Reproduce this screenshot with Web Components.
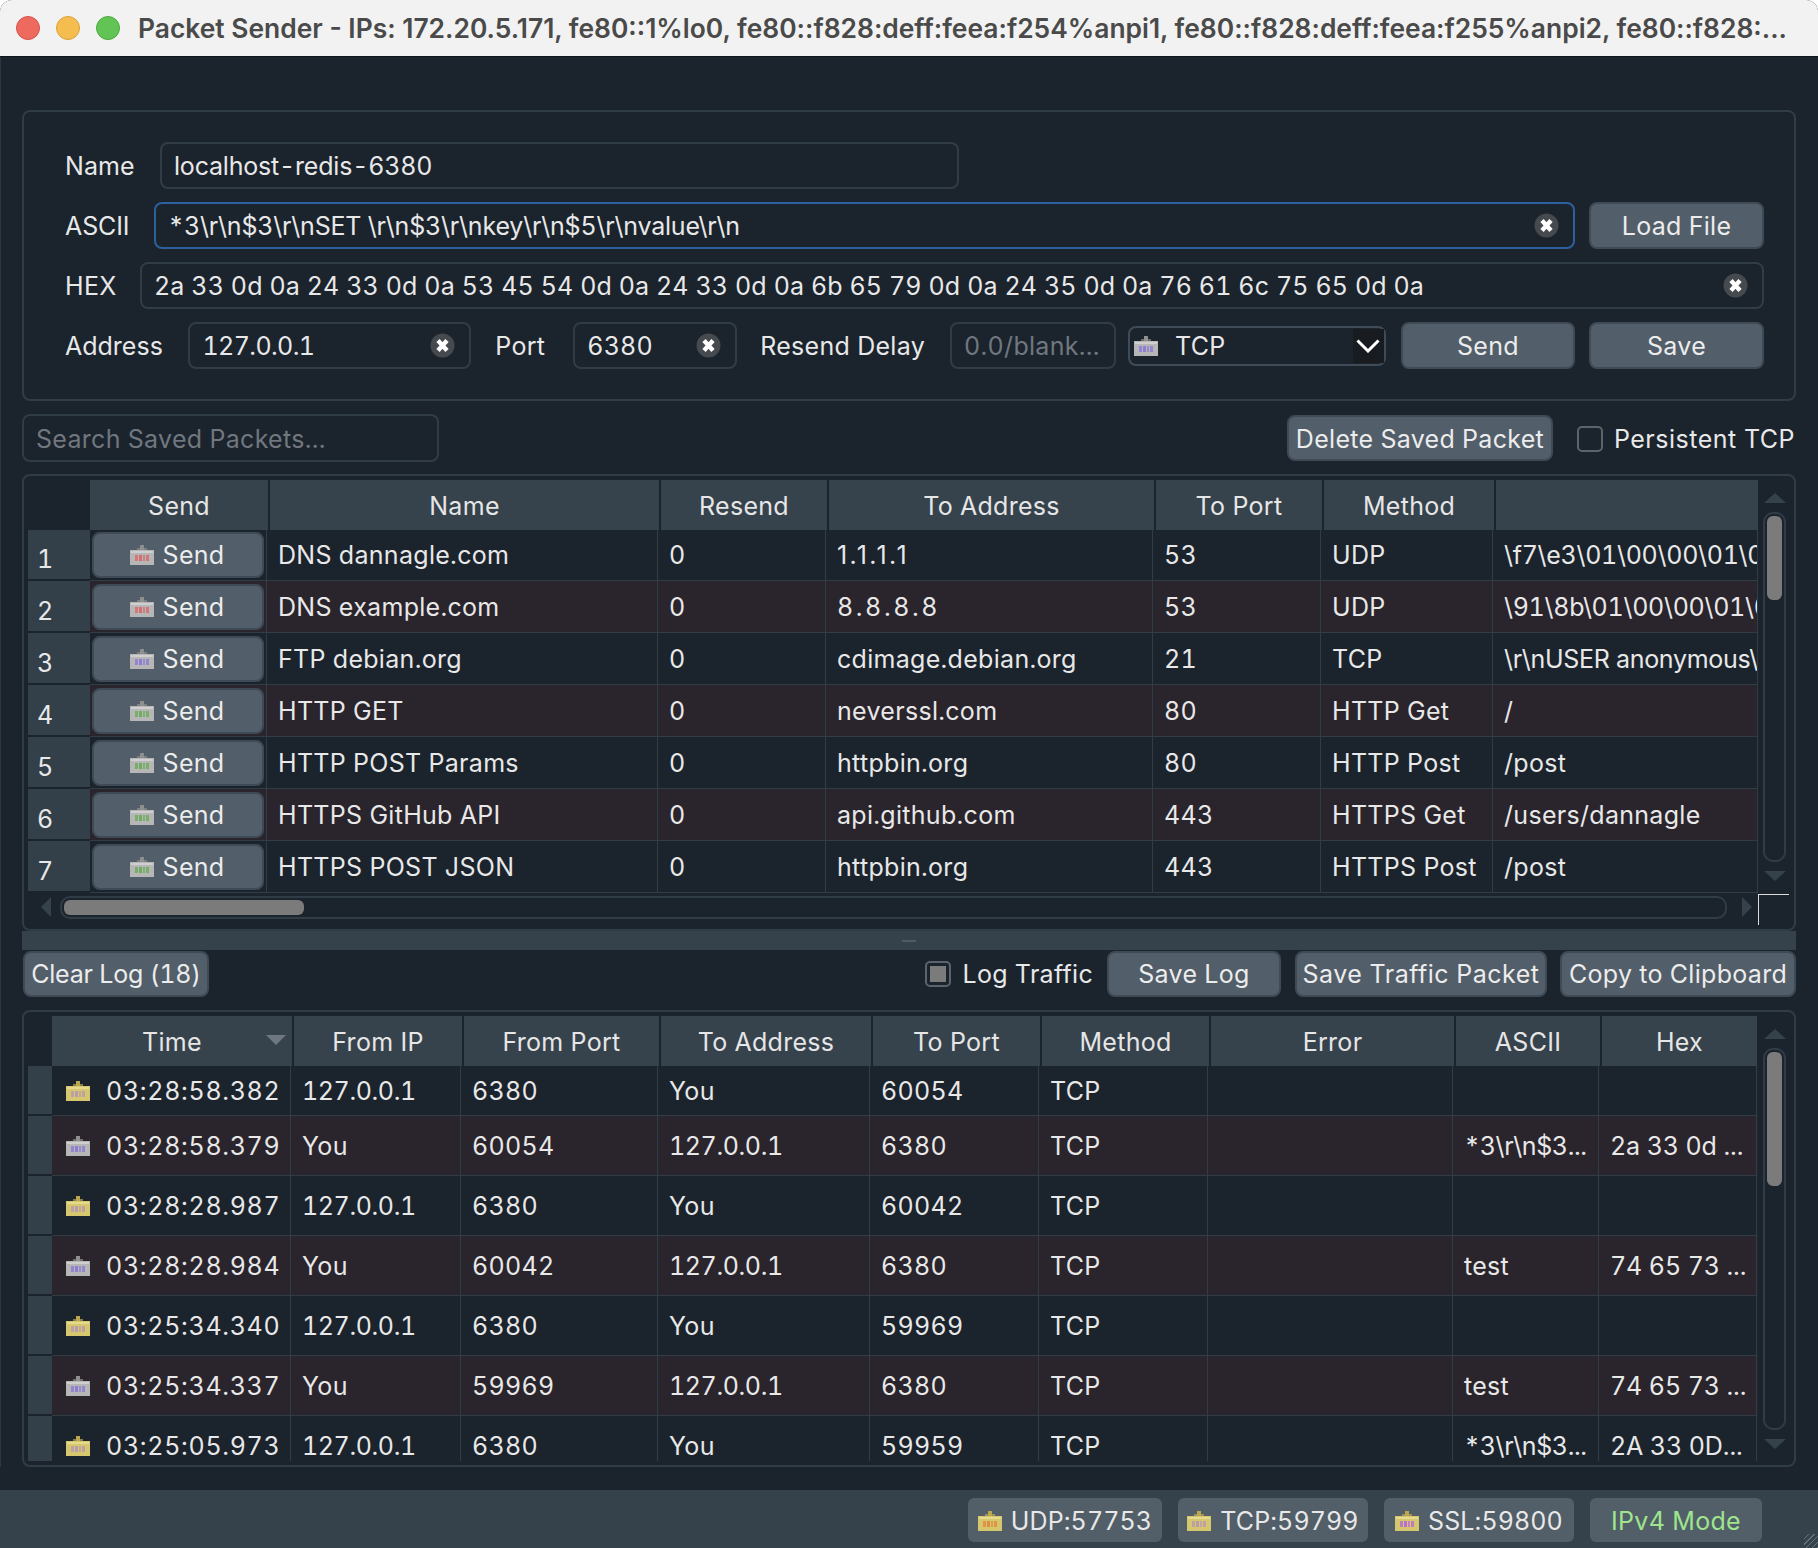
<!DOCTYPE html>
<html>
<head>
<meta charset="utf-8">
<title>Packet Sender</title>
<style>
  html, body { margin: 0; background: #fff; }
  body { font: 25px Inter, "Liberation Sans", sans-serif; letter-spacing: .3px; font-variant-numeric: tabular-nums; color: #e8e8e8; }
</style>
</head>
<body>
<ps-window></ps-window>
<script>
const LINE = '#303c46';
const HEAD = '#36424c';
const BG = '#1b232d';
const ALT = '#2a242c';
const TXT = '#e8e8e8';

// the reference font spaces some strings unevenly, so these cells get their own spacing
const cellStyle = (text) => {
  if (text === '1.1.1.1') return 'font-variant-numeric:normal;letter-spacing:2.3px';
  if (text === '8.8.8.8') return 'letter-spacing:2.6px';
  if (text === '127.0.0.1') return 'letter-spacing:-.4px';
  if (/^\\/.test(text)) return 'letter-spacing:-.3px';
  if (/^\*/.test(text)) return 'letter-spacing:-.4px';
  if (/^(2a|2A|74) /.test(text)) return 'letter-spacing:-.1px';
  return '';
};

customElements.define('ps-icon', class PsIcon extends HTMLElement {
  connectedCallback() {
    const tones = {
      gray: ['#b6b6b6', '#8f8f8f', '#cfcfcf'],
      yellow: ['#d6c76f', '#b9a850', '#e6da8e']
    };
    const marks = { udp: '#d9696b', tcp: '#8b7ad6', http: '#69ad58', tcplog: '#b59ab0', udplog: '#dd8a3c', ssl: '#b56ad8' };
    const [body, knob, edge] = tones[this.getAttribute('tone') || 'gray'];
    const mark = marks[this.getAttribute('kind') || 'tcp'];
    this.attachShadow({ mode: 'open' }).innerHTML = `
      <style>:host { display: inline-block; width: 24px; height: 20px; line-height: 0; flex: none; } svg { display: block; filter: blur(.4px); }</style>
      <svg width="24" height="20" viewBox="0 0 24 20" shape-rendering="crispEdges">
        <rect x="10" y="0" width="4" height="6" fill="${knob}"/>
        <rect x="7" y="3" width="10" height="3" fill="${knob}" opacity=".7"/>
        <rect x="0" y="5" width="24" height="15" fill="${body}"/>
        <rect x="1" y="6" width="22" height="2" fill="${edge}"/>
        <rect x="5" y="10" width="3" height="6" fill="${mark}" opacity=".8"/>
        <rect x="9" y="10" width="3" height="6" fill="${mark}" opacity=".95"/>
        <rect x="13" y="10" width="2" height="6" fill="${mark}" opacity=".7"/>
        <rect x="16" y="10" width="3" height="6" fill="${mark}" opacity=".8"/>
      </svg>`;
  }
});

customElements.define('ps-button', class PsButton extends HTMLElement {
  constructor() {
    super();
    this.attachShadow({ mode: 'open' }).innerHTML = `
      <style>
        :host { display: flex; align-items: center; justify-content: center; box-sizing: border-box; height: 47px;
          background: #525e69; border: 2px solid #3e4a55; border-radius: 8px; color: #ececec; white-space: nowrap; flex: none; gap: 9px; }
      </style>
      <slot></slot>`;
  }
});

customElements.define('ps-input', class PsInput extends HTMLElement {
  constructor() {
    super();
    this.attachShadow({ mode: 'open' }).innerHTML = `
      <style>
        :host { display: flex; align-items: center; box-sizing: border-box; height: 47px; padding: 0 14px 0 12px;
          border: 2px solid ${LINE}; border-radius: 8px; color: ${TXT}; white-space: nowrap; overflow: hidden; letter-spacing: -.2px; }
        :host([focus]) { border-color: #2c609f; }
        :host([placeholder]) { color: #70777e; letter-spacing: .3px; }
        .t { flex: 1; overflow: hidden; }
        .x { display: none; flex: none; width: 25px; height: 25px; }
        :host([clear]) .x { display: block; }
      </style>
      <div class="t"><slot></slot></div>
      <svg class="x" viewBox="0 0 25 25">
        <circle cx="12.5" cy="12.5" r="12" fill="#46494d"/>
        <path d="M8 7.5 L17 17.5 M17 7.5 L8 17.5" stroke="#fff" stroke-width="4.4"/>
      </svg>`;
  }
});

customElements.define('ps-check', class PsCheck extends HTMLElement {
  constructor() {
    super();
    this.attachShadow({ mode: 'open' }).innerHTML = `
      <style>
        :host { display: flex; align-items: center; gap: 11px; white-space: nowrap; flex: none; }
        .b { box-sizing: border-box; width: 26px; height: 26px; border: 2px solid #5b646c; border-radius: 5px; display: flex; padding: 3px; }
        :host([partial]) .b::after { content: ""; flex: 1; background: #7b7b7b; }
      </style>
      <span class="b"></span><slot></slot>`;
  }
});

customElements.define('ps-scrollbar', class PsScrollbar extends HTMLElement {
  connectedCallback() {
    const vert = this.getAttribute('orient') !== 'h';
    const before = this.getAttribute('before');
    const size = this.getAttribute('size');
    const tri = (dir) => {
      const pts = { up: '0,10 11,0 22,10', down: '0,0 11,10 22,0', left: '10,0 10,20 0,10', right: '0,0 0,20 10,10' }[dir];
      const w = vert ? 22 : 10, h = vert ? 10 : 20;
      return `<svg width="${w}" height="${h}" viewBox="0 0 ${w} ${h}"><polygon points="${pts}" fill="#35414b"/></svg>`;
    };
    this.attachShadow({ mode: 'open' }).innerHTML = `
      <style>
        :host { display: flex; box-sizing: border-box; }
        :host([orient=v]) { flex-direction: column; align-items: center; width: 23px; height: 100%; padding: 13px 0 12px; gap: 9px; }
        :host([orient=h]) { align-items: center; height: 36px; padding: 0 6px 8px 13px; gap: 9px; }
        .track { flex: 1; display: flex; box-sizing: border-box; border: 2px solid ${LINE}; border-radius: 10px; padding: 2px; }
        :host([orient=v]) .track { flex-direction: column; width: 23px; }
        :host([orient=h]) .track { height: 23px; margin-right: 6px; }
        .thumb { background: #7b7b7b; border-radius: 6px; flex: none; }
        :host([orient=v]) .thumb { margin-top: ${before}px; height: ${size}px; }
        :host([orient=h]) .thumb { margin-left: ${before}px; width: ${size}px; }
      </style>
      ${tri(vert ? 'up' : 'left')}
      <div class="track"><div class="thumb"></div></div>
      ${tri(vert ? 'down' : 'right')}`;
  }
});

customElements.define('ps-table', class PsTable extends HTMLElement {
  set config(value) {
    this._config = value;
    this.render();
  }

  render() {
    const { rowHead, bounds, heads, rows, firstRow, rowH, viewH, hbar, vbar, numbered, headOff } = this._config;
    const widths = bounds.slice(1).map((b, i) => b - bounds[i]);
    const headCells = heads.map((h, i) => {
      // header edges sit a little right of the cell lines, with a 2px gap between them
      const start = i === 0 ? 0 : bounds[i] + headOff + 2;
      const end = i === heads.length - 1 ? bounds[i + 1] : bounds[i + 1] + headOff;
      const sort = h === 'Time' ? '<i class="sort"></i>' : '';
      return `<div class="hc" style="width:${end - start}px">${h}${sort}</div>`;
    }).join('');
    const bodyRows = rows.map((r, n) => {
      const cells = r.map((c, i) => {
        let inner = c;
        let cls = 'c';
        let extra = '';
        if (c && c.send) {
          inner = `<ps-button class="send"><ps-icon kind="${c.send}"></ps-icon><span>Send</span></ps-button>`;
          cls = 'c btn';
        } else if (c && c.time) {
          inner = `<ps-icon kind="${c.tone === 'yellow' ? 'tcplog' : 'tcp'}" tone="${c.tone}"></ps-icon><span>${c.time}</span>`;
          cls = 'c time';
        } else {
          extra = cellStyle(c);
        }
        return `<div class="${cls}" style="width:${widths[i]}px;${extra}">${inner}</div>`;
      }).join('');
      const h = n === 0 ? firstRow : rowH;
      return `<div class="row ${n % 2 ? 'alt' : ''}" style="height:${h}px">
        <div class="rh" style="width:${rowHead}px">${numbered ? n + 1 : ''}</div>${cells}</div>`;
    }).join('');
    this.shadowRoot || this.attachShadow({ mode: 'open' });
    this.shadowRoot.innerHTML = `
      <style>
        :host { display: block; box-sizing: border-box; border: 2px solid ${LINE}; border-radius: 8px; padding: 4px 0 0 4px; flex: none; }
        .grid { display: grid; grid-template-columns: 1730px 1fr; }
        .view { height: ${viewH}px; overflow: hidden; }
        .head { display: flex; height: 50px; padding-left: ${rowHead}px; gap: 2px; }
        .hc { position: relative; flex: none; box-sizing: border-box; background: ${HEAD}; display: flex; align-items: center; justify-content: center; color: #e6e6e6; padding-top: 1px; }
        .sort { position: absolute; right: 6px; top: 19px; border: 10px solid transparent; border-top-color: #6f7880; border-bottom: 0; }
        .row { display: flex; box-sizing: border-box; background: ${BG}; white-space: nowrap; }
        .row.alt { background: ${ALT}; }
        .rh { flex: none; box-sizing: border-box; background: #333f49; border-bottom: 2px solid ${BG}; padding: 9px 0 0 9px; display: flex; align-items: center; }
        .c { flex: none; box-sizing: border-box; border-right: 1px solid ${LINE}; border-bottom: 1px solid ${LINE}; padding-left: 11px; display: flex; align-items: center; overflow: hidden; color: ${TXT}; }
        .c.btn { padding: 0 2px; border-right-color: ${LINE}; }
        .c.time { padding-left: 14px; gap: 16px; letter-spacing: .7px; }
        .send { width: 100%; height: 46px; padding-right: 2px; }
        .vb { padding-left: 5px; }
        .corner { margin: 1px 0 0 0; width: 31px; height: 31px; border-left: 1px solid #dcdcdc; border-top: 1px solid #dcdcdc; box-sizing: border-box; }
      </style>
      <div class="grid">
        <div class="view">
          <div class="head">${headCells}</div>
          ${bodyRows}
        </div>
        <div class="vb"><ps-scrollbar orient="v" before="${vbar[0]}" size="${vbar[1]}"></ps-scrollbar></div>
        ${hbar ? `<ps-scrollbar orient="h" before="${hbar[0]}" size="${hbar[1]}"></ps-scrollbar><div class="corner"></div>` : ''}
      </div>`;
  }
});

customElements.define('ps-group', class PsGroup extends HTMLElement {
  constructor() {
    super();
    this.attachShadow({ mode: 'open' }).innerHTML = `
      <style>
        :host { display: flex; flex-direction: column; gap: 13px; box-sizing: border-box; height: 291px; margin-top: 53px;
          border: 2px solid ${LINE}; border-radius: 8px; padding: 30px 30px 0 41px; }
      </style>
      <slot></slot>`;
  }
});

customElements.define('ps-row', class PsRow extends HTMLElement {
  constructor() {
    super();
    this.attachShadow({ mode: 'open' }).innerHTML = `
      <style>:host { display: flex; align-items: center; white-space: nowrap; }</style>
      <slot></slot>`;
  }
});

customElements.define('ps-titlebar', class PsTitlebar extends HTMLElement {
  constructor() {
    super();
    this.attachShadow({ mode: 'open' }).innerHTML = `
      <style>
        :host { display: flex; align-items: center; box-sizing: border-box; height: 57px; background: #f2f2f2; border-bottom: 1px solid #11161b;
          padding: 0 0 1px 16px; color: #4a4a4a; font-weight: 600; font-size: 26.4px; letter-spacing: 0; font-variant-numeric: normal; white-space: nowrap; overflow: hidden; }
        i { width: 24px; height: 24px; border-radius: 50%; box-sizing: border-box; margin-right: 16px; flex: none; }
        .r { background: #ee6a5f; border: 1px solid #d5534a; }
        .y { background: #f5bd4f; border: 1px solid #d9a238; }
        .g { background: #61c454; border: 1px solid #4da93f; margin-right: 18px; }
      </style>
      <i class="r"></i><i class="y"></i><i class="g"></i><slot></slot>`;
  }
});

customElements.define('ps-status', class PsStatus extends HTMLElement {
  constructor() {
    super();
    this.attachShadow({ mode: 'open' }).innerHTML = `
      <style>
        :host { display: flex; justify-content: flex-end; gap: 16px; box-sizing: border-box; height: 58px; margin-top: 23px;
          background: #35414b; padding: 8px 56px 0 0; position: relative; }
        .grip { position: absolute; right: 0; bottom: 0; width: 14px; height: 14px;
          background: repeating-linear-gradient(135deg, transparent 0 3px, #65707a 3px 4px); }
      </style>
      <slot></slot><div class="grip"></div>`;
  }
});

customElements.define('ps-badge', class PsBadge extends HTMLElement {
  constructor() {
    super();
    this.attachShadow({ mode: 'open' }).innerHTML = `
      <style>
        :host { display: flex; align-items: center; justify-content: center; gap: 9px; box-sizing: border-box; height: 44px; padding-top: 1px; letter-spacing: .1px;
          background: #525e68; border-radius: 6px; color: ${TXT}; white-space: nowrap; }
        :host([ok]) { color: #9ee58d; }
      </style>
      <slot></slot>`;
  }
});

customElements.define('ps-window', class PsWindow extends HTMLElement {
  constructor() {
    super();
    this.attachShadow({ mode: 'open' }).innerHTML = `
      <style>
        :host { display: block; box-sizing: border-box; width: 1818px; height: 1548px; background: ${BG}; overflow: hidden;
          border-radius: 12px 12px 0 0; }
        main { padding: 0 22px 0 21px; border-left: 1px solid #2b3640; display: flex; flex-direction: column; }
        .combo { display: flex; align-items: center; box-sizing: border-box; width: 258px; height: 40px; margin: 0 15px 0 12px;
          border: 2px solid #3f4c57; border-radius: 8px; padding-left: 4px; flex: none; position: relative; }
        .combo span { margin-left: 17px; }
        .arrow { margin-left: auto; width: 31px; height: 34px; background: #181c21; display: flex; align-items: center; justify-content: center; }
        .search { margin-top: 13px; height: 48px; justify-content: flex-start; }
        .split { height: 19px; background: #35414b; display: flex; align-items: center; justify-content: center; flex: none; }
        .split i { width: 14px; height: 2px; background: #4f5b65; }
        .log { height: 46px; margin: 1px 0 13px; }
        .spacer { flex: 1; }
      </style>
      <ps-titlebar>Packet Sender - IPs: 172.20.5.171, fe80::1%lo0, fe80::f828:deff:feea:f254%anpi1, fe80::f828:deff:feea:f255%anpi2, fe80::f828:...</ps-titlebar>
      <main>
        <ps-group>
          <ps-row>
            <span style="width:95px;letter-spacing:.1px">Name</span>
            <ps-input style="width:799px">localhost-redis-6380</ps-input>
          </ps-row>
          <ps-row>
            <span style="width:89px;letter-spacing:-.1px">ASCII</span>
            <ps-input focus clear style="flex:1">*3\\r\\n$3\\r\\nSET \\r\\n$3\\r\\nkey\\r\\n$5\\r\\nvalue\\r\\n</ps-input>
            <ps-button style="width:175px;margin-left:14px">Load File</ps-button>
          </ps-row>
          <ps-row>
            <span style="width:75px">HEX</span>
            <ps-input clear style="flex:1;letter-spacing:.12px">2a 33 0d 0a 24 33 0d 0a 53 45 54 0d 0a 24 33 0d 0a 6b 65 79 0d 0a 24 35 0d 0a 76 61 6c 75 65 0d 0a</ps-input>
          </ps-row>
          <ps-row>
            <span style="width:123.5px;letter-spacing:0">Address</span>
            <ps-input clear style="width:283px;letter-spacing:-.6px">127.0.0.1</ps-input>
            <span style="width:78px;margin-left:24px">Port</span>
            <ps-input clear style="width:164px;letter-spacing:.2px">6380</ps-input>
            <span style="width:190px;margin-left:23px">Resend Delay</span>
            <ps-input placeholder style="width:166px">0.0/blank...</ps-input>
            <div class="combo"><ps-icon kind="tcp"></ps-icon><span>TCP</span>
              <div class="arrow"><svg width="24" height="14" viewBox="0 0 24 14"><path d="M1.5 1.5 L12 12 L22.5 1.5" fill="none" stroke="#fff" stroke-width="3"/></svg></div>
            </div>
            <ps-button style="width:174px">Send</ps-button>
            <ps-button style="width:175px;margin-left:14px">Save</ps-button>
          </ps-row>
        </ps-group>

        <ps-row class="search">
          <ps-input placeholder style="width:417px;height:48px;padding-top:2px">Search Saved Packets...</ps-input>
          <div class="spacer"></div>
          <ps-button style="width:266px;margin-right:24px;height:46px;padding-top:1px">Delete Saved Packet</ps-button>
          <ps-check style="letter-spacing:.5px;margin-right:1px;padding-top:1px">Persistent TCP</ps-check>
        </ps-row>

        <ps-table id="packets" style="margin-top:12px;height:457px"></ps-table>
        <div class="split"><i></i></div>

        <ps-row class="log">
          <ps-button style="width:186px;height:46px;margin-left:1px;letter-spacing:-.2px">Clear Log (18)</ps-button>
          <div class="spacer"></div>
          <ps-check partial style="margin-right:14px">Log Traffic</ps-check>
          <ps-button style="width:174px;height:46px;margin-right:14px">Save Log</ps-button>
          <ps-button style="width:252px;height:46px;margin-right:13px;letter-spacing:.5px">Save Traffic Packet</ps-button>
          <ps-button style="width:236px;height:46px">Copy to Clipboard</ps-button>
        </ps-row>

        <ps-table id="traffic" style="height:457px"></ps-table>
      </main>
      <ps-status>
        <ps-badge style="width:194px"><ps-icon kind="udplog" tone="yellow"></ps-icon>UDP:57753</ps-badge>
        <ps-badge style="width:190px"><ps-icon kind="tcplog" tone="yellow"></ps-icon>TCP:59799</ps-badge>
        <ps-badge style="width:190px"><ps-icon kind="ssl" tone="yellow"></ps-icon>SSL:59800</ps-badge>
        <ps-badge ok style="width:172px;letter-spacing:.3px">IPv4 Mode</ps-badge>
      </ps-status>`;

    this.shadowRoot.getElementById('packets').config = {
      numbered: true, rowHead: 62, firstRow: 51, rowH: 52, viewH: 413, headOff: 1,
      vbar: [0, 84], hbar: [0, 240],
      bounds: [0, 177, 568, 736, 1063, 1231, 1403, 1668],
      heads: ['Send', 'Name', 'Resend', 'To Address', 'To Port', 'Method', ''],
      rows: [
        [{ send: 'udp' }, 'DNS dannagle.com', '0', '1.1.1.1', '53', 'UDP', '\\f7\\e3\\01\\00\\00\\01\\00\\00\\00\\00'],
        [{ send: 'udp' }, 'DNS example.com', '0', '8.8.8.8', '53', 'UDP', '\\91\\8b\\01\\00\\00\\01\\00\\00\\00\\00'],
        [{ send: 'tcp' }, 'FTP debian.org', '0', 'cdimage.debian.org', '21', 'TCP', '\\r\\nUSER anonymous\\r\\nPASS'],
        [{ send: 'http' }, 'HTTP GET', '0', 'neverssl.com', '80', 'HTTP Get', '/'],
        [{ send: 'http' }, 'HTTP POST Params', '0', 'httpbin.org', '80', 'HTTP Post', '/post'],
        [{ send: 'http' }, 'HTTPS GitHub API', '0', 'api.github.com', '443', 'HTTPS Get', '/users/dannagle'],
        [{ send: 'http' }, 'HTTPS POST JSON', '0', 'httpbin.org', '443', 'HTTPS Post', '/post']
      ]
    };

    const ascii = '*3\\r\\n$3...';
    this.shadowRoot.getElementById('traffic').config = {
      numbered: false, rowHead: 24, firstRow: 50, rowH: 60, viewH: 445, headOff: 1,
      vbar: [0, 134],
      bounds: [0, 239, 409, 606, 818, 987, 1156, 1401, 1547, 1705],
      heads: ['Time', 'From IP', 'From Port', 'To Address', 'To Port', 'Method', 'Error', 'ASCII', 'Hex'],
      rows: [
        [{ time: '03:28:58.382', tone: 'yellow' }, '127.0.0.1', '6380', 'You', '60054', 'TCP', '', '', ''],
        [{ time: '03:28:58.379', tone: 'gray' }, 'You', '60054', '127.0.0.1', '6380', 'TCP', '', ascii, '2a 33 0d ...'],
        [{ time: '03:28:28.987', tone: 'yellow' }, '127.0.0.1', '6380', 'You', '60042', 'TCP', '', '', ''],
        [{ time: '03:28:28.984', tone: 'gray' }, 'You', '60042', '127.0.0.1', '6380', 'TCP', '', 'test', '74 65 73 ...'],
        [{ time: '03:25:34.340', tone: 'yellow' }, '127.0.0.1', '6380', 'You', '59969', 'TCP', '', '', ''],
        [{ time: '03:25:34.337', tone: 'gray' }, 'You', '59969', '127.0.0.1', '6380', 'TCP', '', 'test', '74 65 73 ...'],
        [{ time: '03:25:05.973', tone: 'yellow' }, '127.0.0.1', '6380', 'You', '59959', 'TCP', '', ascii, '2A 33 0D...']
      ]
    };
  }
});
</script>
</body>
</html>
